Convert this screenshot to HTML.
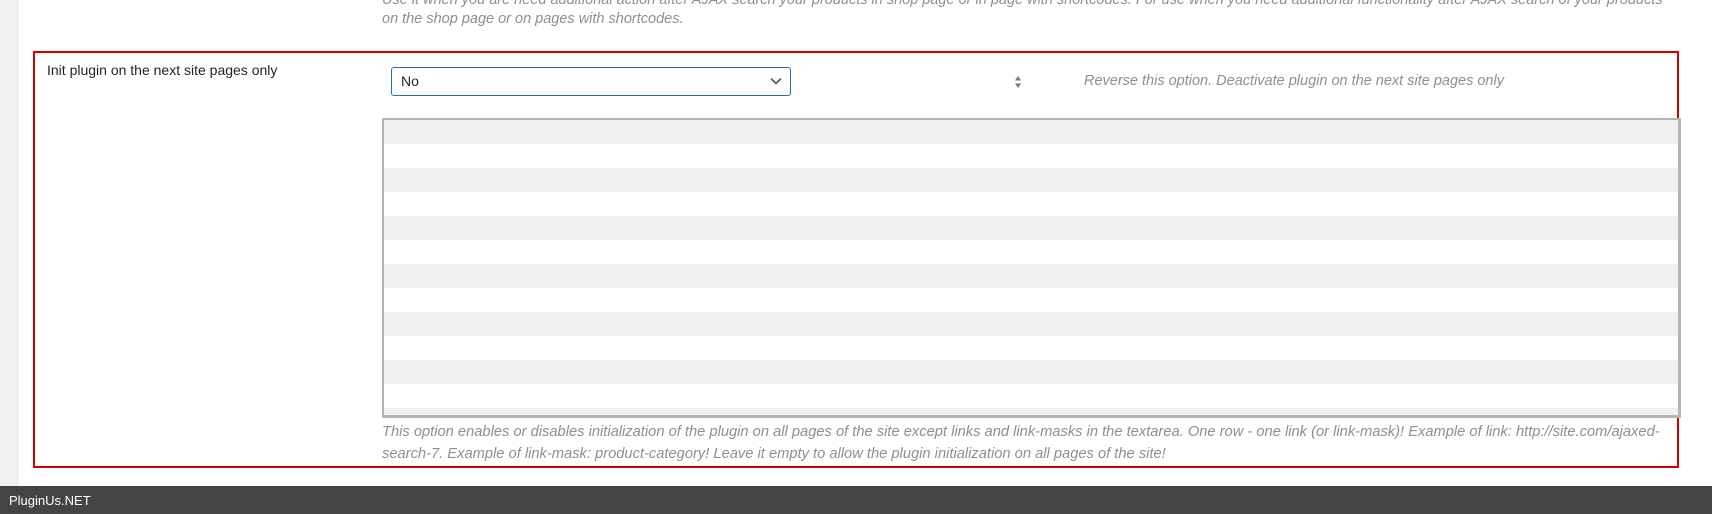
<!DOCTYPE html>
<html><head><style>
html,body{margin:0;padding:0;}
body{width:1712px;height:514px;position:relative;overflow:hidden;background:#fff;font-family:"Liberation Sans",sans-serif;}
.strip{position:absolute;left:0;top:0;width:19px;height:486px;background:#f1f1f1;}
.top{position:absolute;left:382px;top:-9px;font-style:italic;color:#8c8f94;font-size:14.5px;line-height:19px;white-space:nowrap;}
.box{position:absolute;left:33px;top:51px;width:1642px;height:413px;border:2px solid #d30000;}
.label{position:absolute;left:47px;top:62px;font-size:14px;color:#1d2327;}
.sel{position:absolute;left:391px;top:67px;width:398px;height:27px;border:1px solid #2271b1;border-radius:3px;font-size:14px;color:#1d2327;}
.sel span{position:absolute;left:9px;top:5px;}
.sel svg{position:absolute;right:8px;top:9px;}
.spin{position:absolute;left:1014px;top:75px;}
.rev{position:absolute;left:1084px;top:73px;font-style:italic;color:#8c8f94;font-size:14.5px;}
.ta{position:absolute;left:382px;top:118px;width:1294px;height:295px;border:2px solid #b4b4b4;border-right-width:3px;border-bottom-width:3px;
background:repeating-linear-gradient(to bottom,#f0f0f0 0,#f0f0f0 24px,#fff 24px,#fff 48px);}
.help{position:absolute;left:382px;top:421px;font-style:italic;color:#8c8f94;font-size:14.7px;line-height:22px;white-space:nowrap;}
.foot{position:absolute;left:0;top:486px;width:1712px;height:28px;background:#444;color:#fff;font-size:13px;}
.foot span{position:absolute;left:9px;top:7px;}
</style></head><body>
<div class="strip"></div>
<div class="top">Use it when you are need additional action after AJAX search your products in shop page or in page with shortcodes. For use when you need additional functionality after AJAX search of your products<br>on the shop page or on pages with shortcodes.</div>
<div class="box"></div>
<div class="label">Init plugin on the next site pages only</div>
<div class="sel"><span>No</span><svg width="12" height="8" viewBox="0 0 12 8"><path d="M1 1.5 L6 6.5 L11 1.5" fill="none" stroke="#50575e" stroke-width="1.6"/></svg></div>
<svg class="spin" width="8" height="14" viewBox="0 0 8 14"><path d="M4 1 L7 5.5 L1 5.5Z M4 13 L7 8.5 L1 8.5Z" fill="#777"/></svg>
<div class="rev">Reverse this option. Deactivate plugin on the next site pages only</div>
<div class="ta"></div>
<div class="help">This option enables or disables initialization of the plugin on all pages of the site except links and link-masks in the textarea. One row - one link (or link-mask)! Example of link: http://site.com/ajaxed-<br>search-7. Example of link-mask: product-category! Leave it empty to allow the plugin initialization on all pages of the site!</div>
<div class="foot"><span>PluginUs.NET</span></div>
</body></html>
